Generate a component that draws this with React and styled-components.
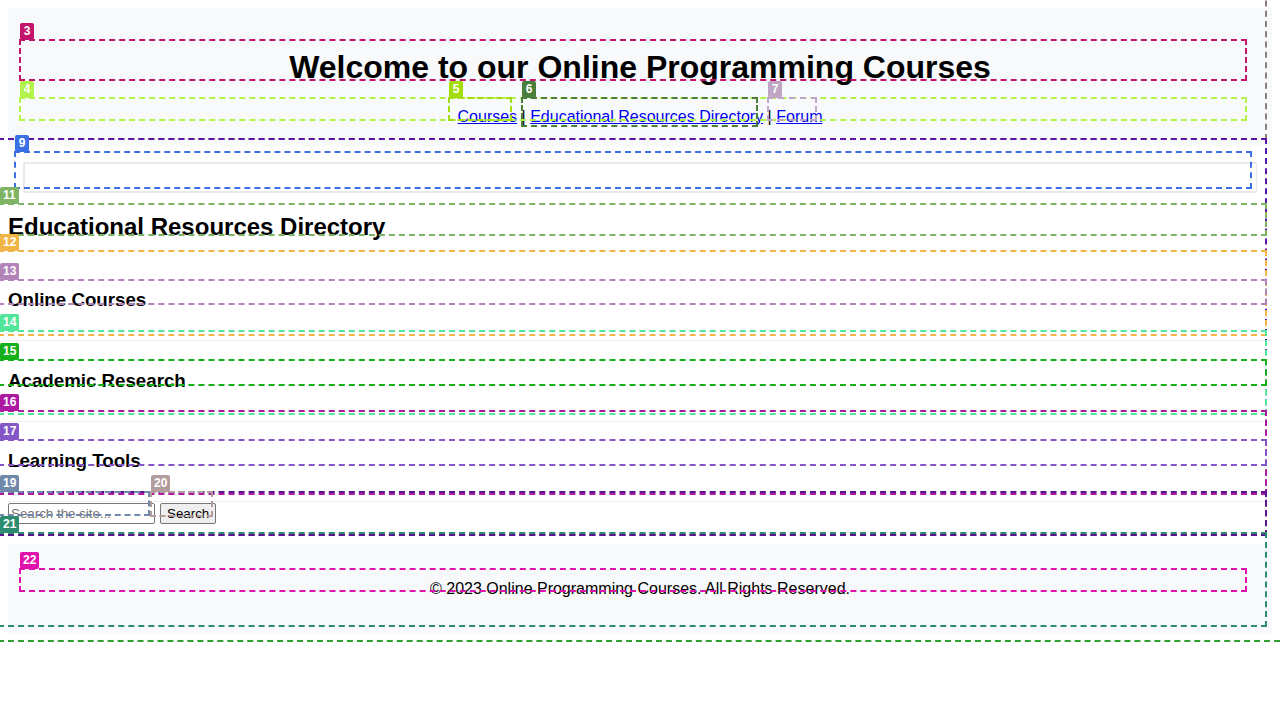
import React from "react";
import styled, { createGlobalStyle } from "styled-components";

const Global = createGlobalStyle`
  html, body { margin: 0; padding: 0; background: #fff; }
  body {
    font-family: "Liberation Sans", Arial, sans-serif;
    font-size: 16px;
    color: #000;
  }
`;

const Page = styled.div`
  position: relative;
  box-sizing: border-box;
  width: 1280px;
  min-height: 720px;
  padding: 8px;
  overflow: hidden;
`;

const Header = styled.header`
  background: #f8f9fa;
  padding: 20px;
  text-align: center;
`;

const Title = styled.h1`
  font-size: 32px;
  font-weight: bold;
  margin: 21.44px 0;
`;

const Nav = styled.nav`
  line-height: normal;
`;

const NavLink = styled.a`
  color: #0000ee;
  text-decoration: underline;
`;

const Breadcrumb = styled.div`
  margin: 16px 15px 0;
  height: 31px;
  box-sizing: border-box;
  border: 2px solid #e9e9e9;
  border-right-width: 1px;
`;

const Main = styled.main``;

const SectionTitle = styled.h2`
  font-size: 24px;
  margin: 19.92px 0;
`;

const Section = styled.section`
  padding: 10px 0;
  border-bottom: 1px solid #efefef;
`;

const SubTitle = styled.h3`
  font-size: 18.72px;
  margin: 18.72px 0;
`;

const SearchForm = styled.form`
  display: flex;
  align-items: center;
  gap: 5px;
  margin-top: 1px;
`;

const SearchInput = styled.input`
  width: 147px;
  height: 21px;
  box-sizing: border-box;
  font-family: "Liberation Sans", Arial, sans-serif;
  font-size: 13.33px;
  border: 1px solid #767676;
  border-radius: 2px;
  padding: 1px 2px;
  &::placeholder { color: #757575; }
`;

const SearchButton = styled.button`
  height: 21px;
  box-sizing: border-box;
  font-family: "Liberation Sans", Arial, sans-serif;
  font-size: 13.33px;
  background: #efefef;
  border: 1px solid #767676;
  border-radius: 2px;
  padding: 1px 6px;
  color: #000;
`;

const Footer = styled.footer`
  background: #f8f9fa;
  padding: 20px;
  margin-top: 20px;
  text-align: center;
`;

const FooterText = styled.p`
  margin: 16px 0;
`;

/* Debug overlay: dashed outlines with numbered tags drawn over the page */
const Overlay = styled.div`
  position: absolute;
  left: 0;
  top: 0;
  width: 1280px;
  height: 720px;
  pointer-events: none;
  overflow: hidden;
`;

const Outline = styled.div`
  position: absolute;
  box-sizing: border-box;
  border: 2px dashed ${(p) => p.$c};
`;

const Tag = styled.span`
  position: absolute;
  height: 17px;
  padding: 0 3px;
  min-width: 8px;
  box-sizing: content-box;
  background: ${(p) => p.$c};
  color: #fff;
  font-family: "Liberation Sans", Arial, sans-serif;
  font-size: 12px;
  font-weight: bold;
  line-height: 17px;
  text-align: center;
  border-radius: 2px;
`;

const W = 1269;

const boxes = [
  { n: null, c: "#30a030", x: -2, y: -20, w: 1292, h: 662 },
  { n: null, c: "#8a7e7e", x: -2, y: -20, w: W, h: 160 },
  { n: null, c: "#5a14a6", x: -2, y: 138, w: W, h: 398 },
  { n: "3", c: "#c2146a", x: 19, y: 39, w: 1228, h: 42 },
  { n: "4", c: "#b2f44a", x: 19, y: 97, w: 1228, h: 24 },
  { n: "5", c: "#a2dc0a", x: 448, y: 97, w: 64, h: 24 },
  { n: "6", c: "#4b7d3b", x: 521, y: 97, w: 237, h: 30 },
  { n: "7", c: "#c0a6c6", x: 767, y: 97, w: 50, h: 24 },
  { n: "9", c: "#3b6fe4", x: 14, y: 151, w: 1238, h: 38 },
  { n: "11", c: "#7eb464", x: -2, y: 203, w: W, h: 33 },
  { n: "12", c: "#f2b445", x: -2, y: 250, w: W, h: 86 },
  { n: "13", c: "#b284ba", x: -2, y: 279, w: W, h: 26 },
  { n: "14", c: "#52e69a", x: -2, y: 330, w: W, h: 85 },
  { n: "15", c: "#16b01a", x: -2, y: 359, w: W, h: 27 },
  { n: "16", c: "#ac1aa2", x: -2, y: 410, w: W, h: 85 },
  { n: "17", c: "#8456c8", x: -2, y: 439, w: W, h: 27 },
  { n: null, c: "#5a148e", x: -2, y: 491, w: W, h: 45 },
  { n: "19", c: "#7088aa", x: -2, y: 491, w: 152, h: 25 },
  { n: "20", c: "#b29c9c", x: 150, y: 491, w: 63, h: 26 },
  { n: "21", c: "#2b8c70", x: -2, y: 532, w: W, h: 95 },
  { n: "22", c: "#e014ac", x: 19, y: 568, w: 1228, h: 24 },
];

function DebugOverlay() {
  return (
    <Overlay>
      {boxes.map((b, i) => (
        <React.Fragment key={i}>
          <Outline
            $c={b.c}
            style={{ left: b.x, top: b.y, width: b.w, height: b.h }}
          />
          {b.n && (
            <Tag
              $c={b.c}
              style={{ left: Math.max(0, b.x + 1), top: b.y - 16 }}
            >
              {b.n}
            </Tag>
          )}
        </React.Fragment>
      ))}
    </Overlay>
  );
}

export default function App() {
  return (
    <Page>
      <Global />
      <Header>
        <Title>Welcome to our Online Programming Courses</Title>
        <Nav>
          <NavLink href="#">Courses</NavLink> |{" "}
          <NavLink href="#">Educational Resources Directory</NavLink> |{" "}
          <NavLink href="#">Forum</NavLink>
        </Nav>
      </Header>
      <Breadcrumb />
      <Main>
        <SectionTitle>Educational Resources Directory</SectionTitle>
        <Section>
          <SubTitle>Online Courses</SubTitle>
        </Section>
        <Section>
          <SubTitle>Academic Research</SubTitle>
        </Section>
        <Section>
          <SubTitle>Learning Tools</SubTitle>
        </Section>
        <SearchForm onSubmit={(e) => e.preventDefault()}>
          <SearchInput type="text" placeholder="Search the site..." />
          <SearchButton type="submit">Search</SearchButton>
        </SearchForm>
      </Main>
      <Footer>
        <FooterText>© 2023 Online Programming Courses. All Rights Reserved.</FooterText>
      </Footer>
      <DebugOverlay />
    </Page>
  );
}
